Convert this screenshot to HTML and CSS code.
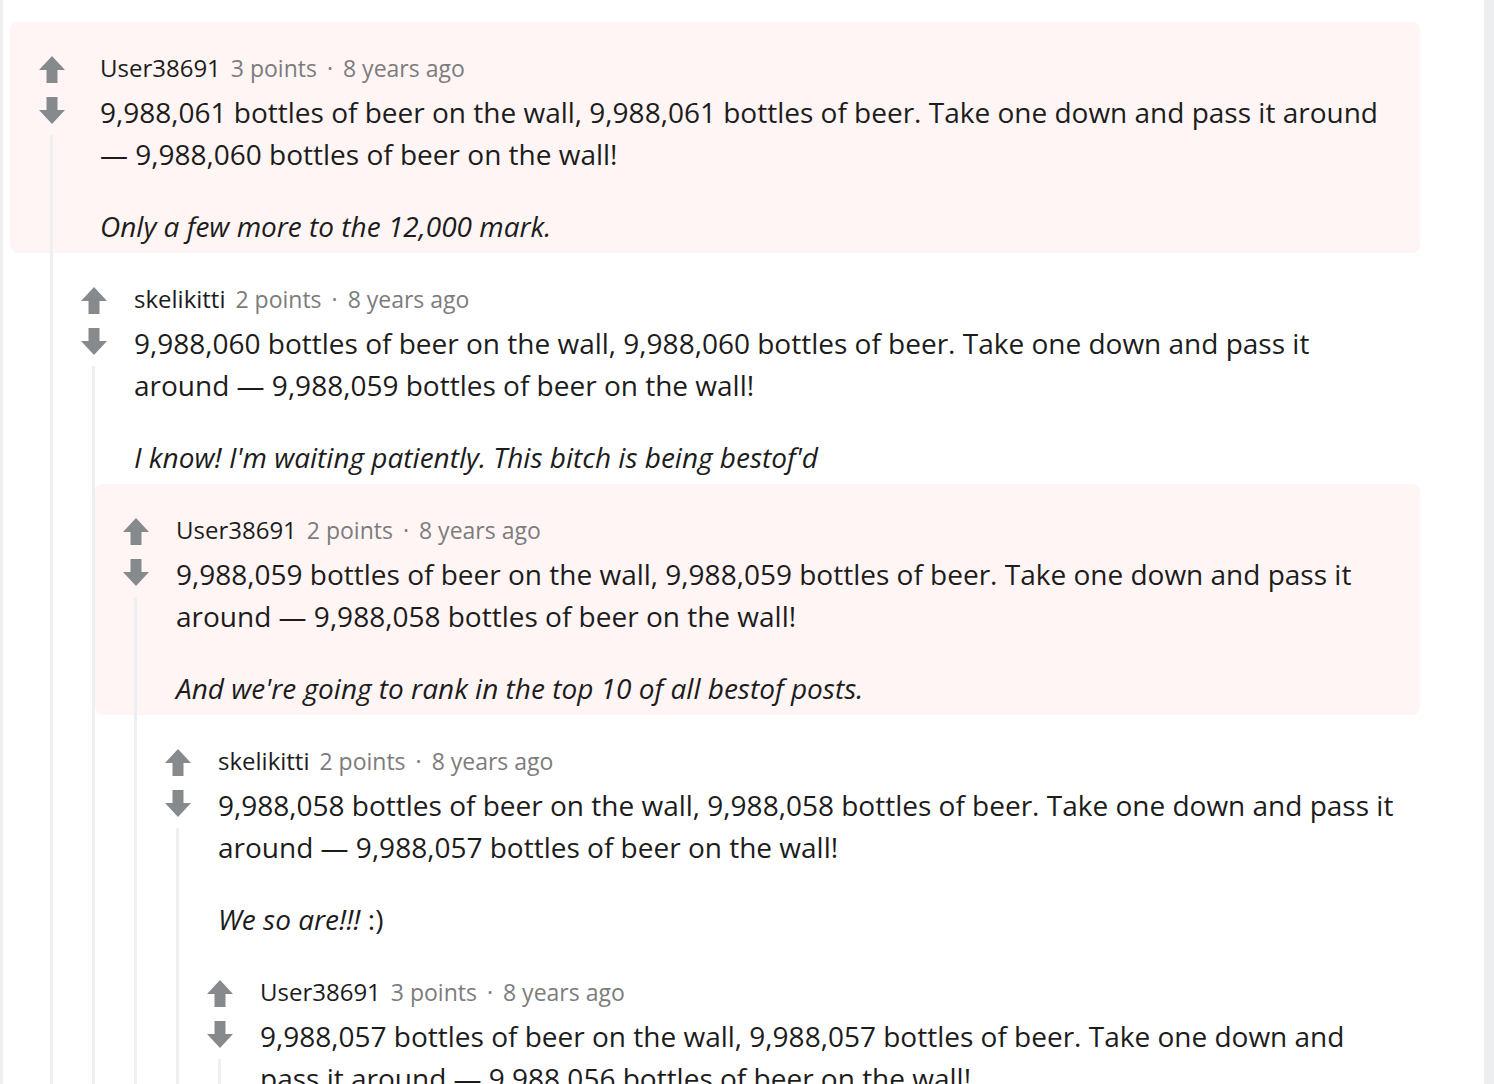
FILE: index.html
```html
<!DOCTYPE html>
<html lang="en">
<head>
<meta charset="utf-8">
<title>Comments</title>
<link rel="stylesheet" href="styles.css">
</head>
<body>
<main class="page">
  <div class="thread root">
    <div class="comment hl">
      <div class="vote">
        <svg class="arrow" viewBox="0 0 26 27" width="26" height="27"><polygon points="13,0 26,14 18.5,14 18.5,27 7.5,27 7.5,14 0,14"/></svg>
        <svg class="arrow down" viewBox="0 0 26 27" width="26" height="27"><polygon points="13,27 26,13 18.5,13 18.5,0 7.5,0 7.5,13 0,13"/></svg>
        <div class="line"></div>
      </div>
      <div class="content">
        <div class="meta"><span class="user">User38691</span> 3 points<span class="sep">·</span>8 years ago</div>
        <p>9,988,061 bottles of beer on the wall, 9,988,061 bottles of beer. Take one down and pass it around — 9,988,060 bottles of beer on the wall!</p>
        <p><em>Only a few more to the 12,000 mark.</em></p>
      </div>
    </div>
    <div class="replies">
      <div class="thread">
        <div class="comment">
          <div class="vote">
            <svg class="arrow" viewBox="0 0 26 27" width="26" height="27"><polygon points="13,0 26,14 18.5,14 18.5,27 7.5,27 7.5,14 0,14"/></svg>
            <svg class="arrow down" viewBox="0 0 26 27" width="26" height="27"><polygon points="13,27 26,13 18.5,13 18.5,0 7.5,0 7.5,13 0,13"/></svg>
            <div class="line"></div>
          </div>
          <div class="content">
            <div class="meta"><span class="user">skelikitti</span> 2 points<span class="sep">·</span>8 years ago</div>
            <p>9,988,060 bottles of beer on the wall, 9,988,060 bottles of beer. Take one down and pass it around — 9,988,059 bottles of beer on the wall!</p>
            <p><em>I know! I'm waiting patiently. This bitch is being bestof'd</em></p>
          </div>
        </div>
        <div class="replies">
          <div class="thread">
            <div class="comment hl">
              <div class="vote">
                <svg class="arrow" viewBox="0 0 26 27" width="26" height="27"><polygon points="13,0 26,14 18.5,14 18.5,27 7.5,27 7.5,14 0,14"/></svg>
                <svg class="arrow down" viewBox="0 0 26 27" width="26" height="27"><polygon points="13,27 26,13 18.5,13 18.5,0 7.5,0 7.5,13 0,13"/></svg>
                <div class="line"></div>
              </div>
              <div class="content">
                <div class="meta"><span class="user">User38691</span> 2 points<span class="sep">·</span>8 years ago</div>
                <p>9,988,059 bottles of beer on the wall, 9,988,059 bottles of beer. Take one down and pass it around — 9,988,058 bottles of beer on the wall!</p>
                <p><em>And we're going to rank in the top 10 of all bestof posts.</em></p>
              </div>
            </div>
            <div class="replies">
              <div class="thread">
                <div class="comment">
                  <div class="vote">
                    <svg class="arrow" viewBox="0 0 26 27" width="26" height="27"><polygon points="13,0 26,14 18.5,14 18.5,27 7.5,27 7.5,14 0,14"/></svg>
                    <svg class="arrow down" viewBox="0 0 26 27" width="26" height="27"><polygon points="13,27 26,13 18.5,13 18.5,0 7.5,0 7.5,13 0,13"/></svg>
                    <div class="line"></div>
                  </div>
                  <div class="content">
                    <div class="meta"><span class="user">skelikitti</span> 2 points<span class="sep">·</span>8 years ago</div>
                    <p>9,988,058 bottles of beer on the wall, 9,988,058 bottles of beer. Take one down and pass it around — 9,988,057 bottles of beer on the wall!</p>
                    <p><em>We so are!!!</em> :)</p>
                  </div>
                </div>
                <div class="replies">
                  <div class="thread">
                    <div class="comment">
                      <div class="vote">
                        <svg class="arrow" viewBox="0 0 26 27" width="26" height="27"><polygon points="13,0 26,14 18.5,14 18.5,27 7.5,27 7.5,14 0,14"/></svg>
                        <svg class="arrow down" viewBox="0 0 26 27" width="26" height="27"><polygon points="13,27 26,13 18.5,13 18.5,0 7.5,0 7.5,13 0,13"/></svg>
                        <div class="line"></div>
                      </div>
                      <div class="content">
                        <div class="meta"><span class="user">User38691</span> 3 points<span class="sep">·</span>8 years ago</div>
                        <p>9,988,057 bottles of beer on the wall, 9,988,057 bottles of beer. Take one down and pass it around — 9,988,056 bottles of beer on the wall!</p>
                      </div>
                    </div>
                  </div>
                </div>
              </div>
            </div>
          </div>
        </div>
      </div>
    </div>
  </div>
</main>
<aside class="scroll-strip"></aside>
</body>
</html>
```
FILE: styles.css
```css
html, body {
  margin: 0;
  padding: 0;
  background: #ffffff;
}
body {
  display: flex;
  min-height: 100vh;
  font-family: "Open Sans", "Noto Sans", sans-serif;
  color: #1c1c1c;
  overflow: hidden;
}
.page {
  flex: 1;
  min-width: 0;
  border-left: 3px solid #edeff1;
  padding: 22px 64px 0 7px;
}
.scroll-strip {
  width: 10px;
  flex-shrink: 0;
  background: #edeef0;
}
.thread {
  display: flex;
  flex-direction: column;
}
.comment {
  display: flex;
  padding: 0 16px 0 28px;
  border-radius: 8px;
}
.comment.hl {
  background: #fff5f4;
}
.root > .comment {
  padding-left: 29px;
}
.vote {
  width: 26px;
  flex-shrink: 0;
  display: flex;
  flex-direction: column;
  padding-top: 34px;
}
.arrow {
  display: block;
  fill: #878a8c;
}
.arrow.down {
  margin-top: 14px;
}
.line {
  flex: 1;
  width: 3px;
  margin: 11px 0 0 11px;
  background: #edeff1;
}
.content {
  flex: 1;
  min-width: 0;
  padding: 30px 0 6px 27px;
}
.root > .comment > .content {
  padding-left: 35px;
}
.meta {
  font-size: 23px;
  line-height: 32px;
  color: #7c7c7c;
  margin-bottom: 7px;
}
.user {
  font-size: 24px;
  color: #1c1c1c;
  margin-right: 4px;
}
.sep {
  margin: 0 10px;
}
.content p {
  margin: 0;
  font-size: 28px;
  line-height: 42px;
}
.content p + p {
  margin-top: 30px;
}
.replies {
  margin-left: 39px;
  border-left: 3px solid #edeff1;
}
.root > .replies {
  margin-left: 40px;
}
```
